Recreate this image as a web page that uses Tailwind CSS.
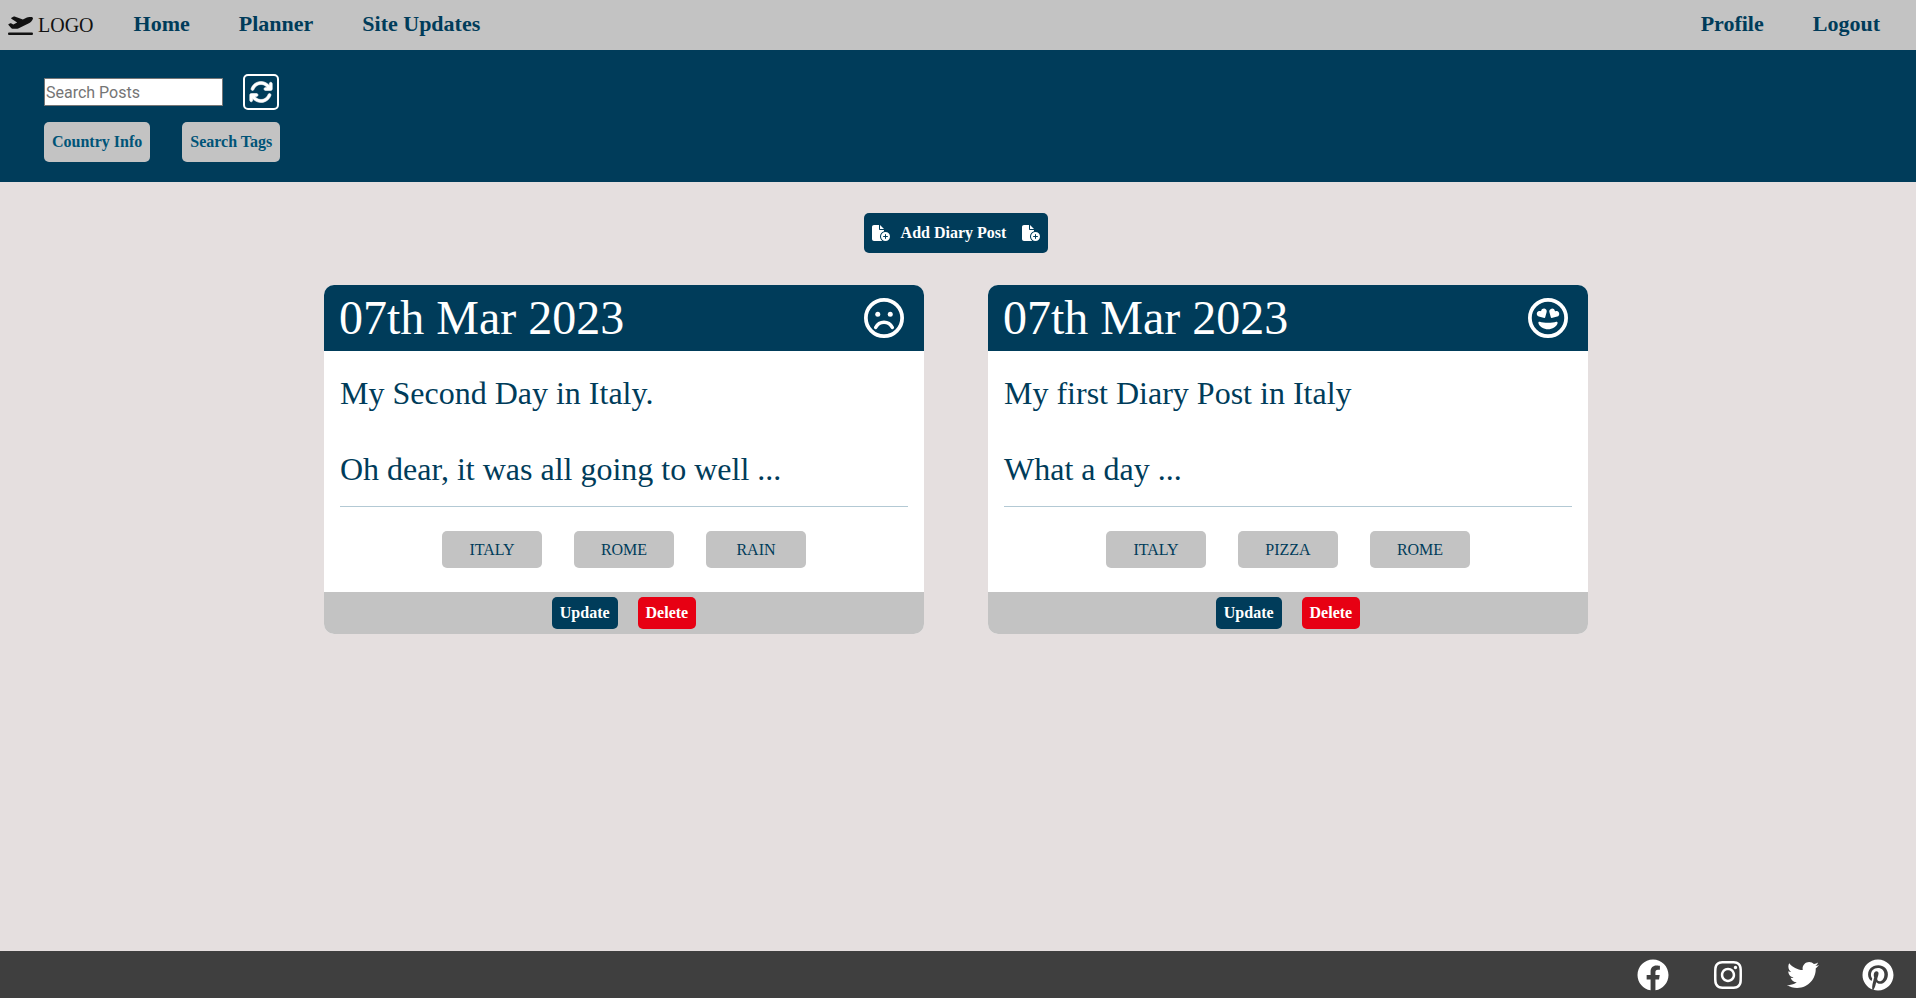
<!DOCTYPE html>
<html lang="en">
<head>
<meta charset="utf-8">
<meta name="viewport" content="width=device-width, initial-scale=1">
<title>Travel Diary</title>
<script src="https://cdn.jsdelivr.net/npm/@tailwindcss/browser@4"></script>
</head>
<body class="flex min-h-screen flex-col bg-[#e5dfdf] font-['Liberation_Serif',serif] text-[#003c5a]">
<svg class="hidden" aria-hidden="true">
  <symbol id="file-plus" viewBox="0 0 576 512"><path d="M0 64C0 28.700 28.700 0 64 0H224V128c0 17.700 14.300 32 32 32H384v38.600C310.100 219.500 256 287.400 256 368c0 59.100 29.100 111.300 73.700 143.300c-3.200 .5-6.400 .7-9.700 .7H64c-35.300 0-64-28.700-64-64V64zm384 64H256V0L384 128zm48 96a144 144 0 1 1 0 288 144 144 0 1 1 0-288zm16 80c0-8.800-7.200-16-16-16s-16 7.200-16 16v48H368c-8.800 0-16 7.200-16 16s7.200 16 16 16h48v48c0 8.800 7.200 16 16 16s16-7.200 16-16V384h48c8.800 0 16-7.200 16-16s-7.200-16-16-16H448V304z"/></symbol>
</svg>

<header class="flex h-[50px] items-center bg-[#c3c3c3] pr-9 pl-2">
  <a href="#" class="flex items-center gap-[5px] text-xl leading-6 text-[#111]">
    <svg class="h-5 w-[25px]" viewBox="0 0 640 512" fill="currentColor" aria-hidden="true"><path d="M381 114.900L186.100 41.800c-16.700-6.200-35.200-5.300-51.100 2.700L89.100 67.400C78 73 77.200 88.500 87.600 95.200l146.900 94.500L136 240 77.800 214.100c-8.700-3.900-18.800-3.700-27.300 .6L18.300 230.800c-9.300 4.700-11.800 16.800-5 24.700l73.100 85.300c6.100 7.100 15 11.200 24.300 11.200H248.400c5 0 9.900-1.200 14.300-3.400L535.600 212.200c46.500-23.300 82.500-63.300 100.800-112C645.900 75 627.200 48 600.200 48H542.800c-20.200 0-40.200 4.800-58.200 14L381 114.900zM0 480c0 17.700 14.300 32 32 32H608c17.700 0 32-14.300 32-32s-14.300-32-32-32H32c-17.700 0-32 14.300-32 32z"/></svg>
    <span>LOGO</span>
  </a>
  <nav class="ml-10 flex flex-1 gap-[49px] pb-0.5 text-[22px] leading-6 font-bold">
    <a href="#">Home</a>
    <a href="#">Planner</a>
    <a href="#">Site Updates</a>
    <a href="#" class="ml-auto">Profile</a>
    <a href="#">Logout</a>
  </nav>
</header>

<section class="flex flex-col gap-3 bg-[#003c5a] px-11 pt-6 pb-5">
  <form class="flex items-center gap-5">
    <input type="text" aria-label="Search Posts" placeholder="Search Posts" class="h-7 w-[179px] border border-[#767676] bg-white px-px font-['Roboto',sans-serif] text-base text-black placeholder:text-[#757575]">
    <button type="button" aria-label="Refresh posts" class="flex size-9 items-center justify-center rounded-[5px] border-2 border-white text-white">
      <svg class="size-6 shrink-0" viewBox="0 0 512 512" fill="currentColor" stroke="currentColor" stroke-width="12" aria-hidden="true"><path d="M105.100 202.600c7.700-21.800 20.200-42.300 37.800-59.800c62.500-62.500 163.800-62.500 226.300 0L386.300 160H352c-17.700 0-32 14.300-32 32s14.300 32 32 32H463.900c17.700 0 32-14.300 32-32V80c0-17.700-14.300-32-32-32s-32 14.300-32 32v35.200L414.400 97.600c-87.500-87.500-229.300-87.500-316.800 0C73.200 122 55.600 150.700 44.800 181.400c-5.900 16.700 2.900 34.900 19.500 40.800s34.900-2.900 40.800-19.500zM39 289.300c-5 1.500-9.800 4.200-13.700 8.200c-4 4-6.700 8.800-8.100 14c-.3 1.200-.6 2.500-.8 3.800c-.3 1.700-.4 3.400-.4 5.100V432c0 17.700 14.300 32 32 32s32-14.300 32-32V396.900l17.600 17.500c87.500 87.400 229.300 87.400 316.700 0c24.400-24.400 42.100-53.100 52.900-83.700c5.900-16.700-2.900-34.900-19.500-40.800s-34.900 2.900-40.800 19.500c-7.700 21.800-20.200 42.300-37.800 59.800c-62.500 62.500-163.800 62.500-226.300 0L125.600 352H160c17.700 0 32-14.300 32-32s-14.300-32-32-32H48.400c-1.600 0-3.200 .1-4.800 .3s-3.100 .5-4.600 1z"/></svg>
    </button>
  </form>
  <div class="flex gap-8 text-base font-bold text-[#005478]">
    <button type="button" class="h-10 rounded-[5px] bg-[#c3c3c3] px-2">Country Info</button>
    <button type="button" class="h-10 rounded-[5px] bg-[#c3c3c3] px-2">Search Tags</button>
  </div>
</section>

<main class="flex flex-1 flex-col items-center gap-8 pt-[31px] pr-1">
  <button type="button" class="flex h-10 items-center rounded-[5px] bg-[#003c5a] px-2 font-bold text-white">
    <svg class="h-4 w-[18px]" fill="currentColor" aria-hidden="true"><use href="#file-plus"/></svg>
    <span class="mr-4 ml-[11px]">Add Diary Post</span>
    <svg class="h-4 w-[18px]" fill="currentColor" aria-hidden="true"><use href="#file-plus"/></svg>
  </button>

  <div class="flex flex-wrap justify-center gap-16">
    <article class="w-[600px] overflow-hidden rounded-[10px] bg-white">
      <header class="flex h-[66px] items-center justify-between bg-[#003c5a] pr-5 pl-[15px] text-white">
        <h2 class="text-5xl">07th Mar 2023</h2>
        <svg class="size-10" viewBox="0 0 512 512" role="img" aria-label="Sad" fill="none" stroke="currentColor">
          <circle cx="256" cy="256" r="232" stroke-width="48"/>
          <circle cx="176" cy="208" r="32" fill="currentColor" stroke="none"/>
          <circle cx="336" cy="208" r="32" fill="currentColor" stroke="none"/>
          <path d="M149 378C172 334 210 311 256 311s84 23 107 67" stroke-width="44" stroke-linecap="round"/>
        </svg>
      </header>
      <div class="px-4 pt-[23px] pb-6 text-[32px] leading-[38px]">
        <p>My Second Day in Italy.</p>
        <p class="mt-[38px]">Oh dear, it was all going to well ...</p>
        <hr class="mt-[18px] border-[#b3c9d4]">
        <ul class="mt-6 flex justify-center gap-8 text-base">
          <li class="flex h-[37px] w-[100px] items-center justify-center rounded-[5px] bg-[#c3c3c3]">ITALY</li>
          <li class="flex h-[37px] w-[100px] items-center justify-center rounded-[5px] bg-[#c3c3c3]">ROME</li>
          <li class="flex h-[37px] w-[100px] items-center justify-center rounded-[5px] bg-[#c3c3c3]">RAIN</li>
        </ul>
      </div>
      <footer class="flex h-[42px] items-center justify-center gap-5 bg-[#c3c3c3] font-bold text-white">
        <button type="button" class="h-8 rounded-[5px] bg-[#003c5a] px-2">Update</button>
        <button type="button" class="h-8 rounded-[5px] bg-[#e70013] px-2">Delete</button>
      </footer>
    </article>

    <article class="w-[600px] overflow-hidden rounded-[10px] bg-white">
      <header class="flex h-[66px] items-center justify-between bg-[#003c5a] pr-5 pl-[15px] text-white">
        <h2 class="text-5xl">07th Mar 2023</h2>
        <svg class="size-10" viewBox="-8 0 512 512" role="img" aria-label="Loved it" fill="currentColor">
          <circle cx="248" cy="256" r="232" fill="none" stroke="currentColor" stroke-width="48"/>
          <path d="M353.600 304.600c-25.900 8.300-64.400 13.100-105.600 13.100s-79.600-4.800-105.600-13.100c-9.800-3.100-19.400 5.300-17.700 15.300 7.900 47.200 71.300 80 123.300 80s115.300-32.900 123.300-80c1.600-9.800-7.700-18.400-17.700-15.300zm-152.800-48.900c4.500 1.200 9.200-1.500 10.500-6l19.400-69.900c5.600-20.300-7.400-41.100-28.800-44.500-18.600-3-36.400 8.800-41.500 27.100l-2 7.100-7.100-1.900c-18.200-4.700-38.200 4.300-44.900 22-7.700 20.200 3.800 41.900 24.200 47.200l70.200 18.900zm188.800-65.300c-6.700-17.600-26.700-26.700-44.900-22l-7.100 1.900-2-7.100c-5-18.100-22.800-30.900-41.500-27.100-21.400 4.400-34.400 24.200-28.800 44.500l19.400 69.900c1.200 4.500 5.900 7.200 10.500 6l70.200-18.900c20.400-5.300 31.900-26.900 24.200-47.200z"/>
        </svg>
      </header>
      <div class="px-4 pt-[23px] pb-6 text-[32px] leading-[38px]">
        <p>My first Diary Post in Italy</p>
        <p class="mt-[38px]">What a day ...</p>
        <hr class="mt-[18px] border-[#b3c9d4]">
        <ul class="mt-6 flex justify-center gap-8 text-base">
          <li class="flex h-[37px] w-[100px] items-center justify-center rounded-[5px] bg-[#c3c3c3]">ITALY</li>
          <li class="flex h-[37px] w-[100px] items-center justify-center rounded-[5px] bg-[#c3c3c3]">PIZZA</li>
          <li class="flex h-[37px] w-[100px] items-center justify-center rounded-[5px] bg-[#c3c3c3]">ROME</li>
        </ul>
      </div>
      <footer class="flex h-[42px] items-center justify-center gap-5 bg-[#c3c3c3] font-bold text-white">
        <button type="button" class="h-8 rounded-[5px] bg-[#003c5a] px-2">Update</button>
        <button type="button" class="h-8 rounded-[5px] bg-[#e70013] px-2">Delete</button>
      </footer>
    </article>
  </div>
</main>

<footer class="flex h-[47px] items-center justify-end gap-[43px] bg-[#3f3f3f] pr-[22px] text-white">
  <a href="#" aria-label="Facebook"><svg class="size-8" viewBox="0 0 512 512" fill="currentColor"><path d="M504 256C504 119 393 8 256 8S8 119 8 256c0 123.780 90.690 226.380 209.250 245V327.690h-63V256h63v-54.640c0-62.150 37-96.480 93.670-96.480 27.140 0 55.520 4.840 55.520 4.840v61h-31.280c-30.800 0-40.410 19.120-40.410 38.730V256h68.780l-11 71.690h-57.780V501C413.310 482.380 504 379.780 504 256z"/></svg></a>
  <a href="#" aria-label="Instagram"><svg class="size-8" viewBox="-32 0 512 512" fill="currentColor"><path d="M224.100 141c-63.600 0-114.900 51.300-114.900 114.900s51.300 114.900 114.900 114.900S339 319.500 339 255.900 287.700 141 224.100 141zm0 189.600c-41.100 0-74.700-33.500-74.700-74.700s33.500-74.700 74.700-74.700 74.700 33.500 74.700 74.700-33.600 74.700-74.700 74.700zm146.400-194.300c0 14.900-12 26.800-26.800 26.800-14.900 0-26.800-12-26.800-26.800s12-26.800 26.800-26.800 26.800 12 26.800 26.800zm76.100 27.200c-1.700-35.900-9.900-67.700-36.200-93.900-26.200-26.200-58-34.400-93.900-36.200-37-2.100-147.900-2.100-184.900 0-35.800 1.700-67.600 9.900-93.900 36.100s-34.400 58-36.200 93.900c-2.100 37-2.100 147.900 0 184.900 1.700 35.900 9.900 67.700 36.200 93.900s58 34.400 93.900 36.200c37 2.100 147.900 2.100 184.900 0 35.900-1.700 67.700-9.900 93.900-36.200 26.200-26.200 34.400-58 36.200-93.900 2.100-37 2.100-147.800 0-184.800zM398.800 388c-7.800 19.600-22.900 34.700-42.600 42.600-29.500 11.700-99.500 9-132.100 9s-102.700 2.600-132.100-9c-19.600-7.800-34.700-22.900-42.600-42.600-11.700-29.500-9-99.500-9-132.100s-2.600-102.700 9-132.100c7.800-19.600 22.900-34.700 42.600-42.600 29.500-11.700 99.500-9 132.100-9s102.700-2.600 132.100 9c19.600 7.800 34.700 22.900 42.600 42.600 11.700 29.500 9 99.500 9 132.100s2.700 102.700-9 132.100z"/></svg></a>
  <a href="#" aria-label="Twitter"><svg class="size-8" viewBox="0 0 512 512" fill="currentColor"><path d="M459.370 151.716c.325 4.548.325 9.097.325 13.645 0 138.720-105.583 298.558-298.558 298.558-59.452 0-114.680-17.219-161.137-47.106 8.447.974 16.568 1.299 25.340 1.299 49.055 0 94.213-16.568 130.274-44.832-46.132-.975-84.792-31.188-98.112-72.772 6.498.974 12.995 1.624 19.818 1.624 9.421 0 18.843-1.300 27.614-3.573-48.081-9.747-84.143-51.980-84.143-102.985v-1.299c13.969 7.797 30.214 12.670 47.431 13.319-28.264-18.843-46.781-51.005-46.781-87.391 0-19.492 5.197-37.360 14.294-52.954 51.655 63.675 129.300 105.258 216.365 109.807-1.624-7.797-2.599-15.918-2.599-24.040 0-57.828 46.782-104.934 104.934-104.934 30.213 0 57.502 12.670 76.670 33.137 23.715-4.548 46.456-13.320 66.599-25.340-7.798 24.366-24.366 44.833-46.132 57.827 21.117-2.273 41.584-8.122 60.426-16.243-14.292 20.791-32.161 39.308-52.628 54.253z"/></svg></a>
  <a href="#" aria-label="Pinterest"><svg class="size-8" viewBox="-8 0 512 512" fill="currentColor"><path d="M496 256c0 137-111 248-248 248-25.600 0-50.200-3.900-73.400-11.100 10.100-16.500 25.200-43.500 30.800-65 3-11.600 15.400-59 15.400-59 8.100 15.400 31.700 28.500 56.800 28.500 74.800 0 128.700-68.800 128.700-154.300 0-81.900-66.900-143.200-152.900-143.200-107 0-163.900 71.800-163.900 150.100 0 36.400 19.400 81.700 50.300 96.100 4.700 2.200 7.200 1.200 8.300-3.300.8-3.400 5-20.300 6.900-28.100.6-2.500.3-4.700-1.700-7.100-10.100-12.500-18.300-35.300-18.300-56.600 0-54.700 41.400-107.600 112-107.600 60.900 0 103.600 41.500 103.600 100.900 0 67.100-33.900 113.600-78 113.600-24.300 0-42.600-20.100-36.700-44.800 7-29.500 20.500-61.300 20.500-82.600 0-19-10.200-34.900-31.400-34.900-24.900 0-44.900 25.700-44.900 60.200 0 22 7.400 36.800 7.400 36.800s-24.500 103.800-29 123.200c-5 21.400-3 51.600-.9 71.200C65.400 450.900 0 361.100 0 256 0 119 111 8 248 8s248 111 248 248z"/></svg></a>
</footer>
</body>
</html>
